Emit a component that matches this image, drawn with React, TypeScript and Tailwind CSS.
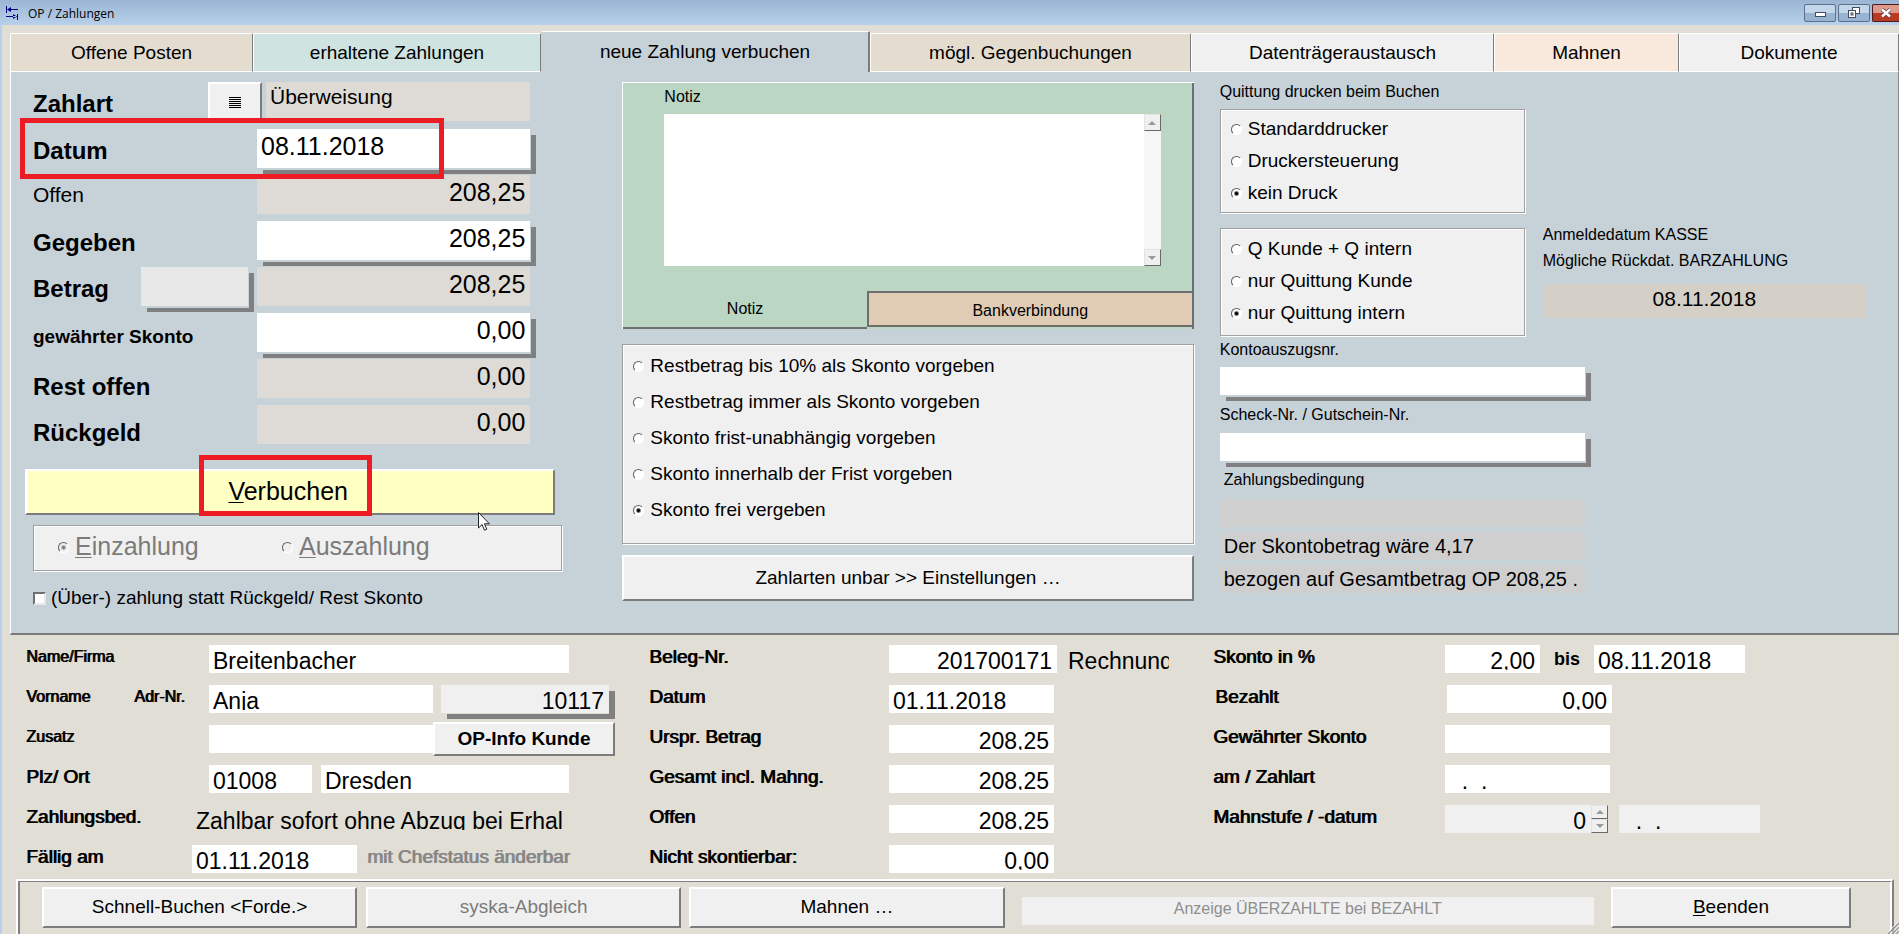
import React, { useState } from 'react';
import clsx from 'clsx';

const raised = 'border-2 border-t-white border-l-white border-r-[#7c7c7c] border-b-[#7c7c7c] bg-[#f0f0f0]';
const etched = 'border border-[#a0a0a0] bg-[#f0f0f0] shadow-[1px_1px_0_0_#ffffff,inset_1px_1px_0_0_#ffffff]';
const dropShadow = 'shadow-[1px_2px_0_0_#c7d1d8,6px_6px_0_0_#808080]';

const tabs = [
  { name: 'Offene Posten', color: 'bg-[#e3dccf]' },
  { name: 'erhaltene Zahlungen', color: 'bg-[#cfe3e1]' },
  { name: 'neue Zahlung verbuchen', color: 'bg-[#c7d1d8]' },
  { name: 'mögl. Gegenbuchungen', color: 'bg-[#e3dccf]' },
  { name: 'Datenträgeraustausch', color: 'bg-[#f0f0f0]' },
  { name: 'Mahnen', color: 'bg-[#f8e9dc]' },
  { name: 'Dokumente', color: 'bg-[#f0f0f0]' },
];

interface RadioProps {
  group: string;
  label: React.ReactNode;
  checked?: boolean;
  disabled?: boolean;
}

function Radio({ group, label, checked, disabled }: RadioProps) {
  return (
    <label className="flex items-center gap-[6px] whitespace-nowrap">
      <input
        type="radio"
        name={group}
        defaultChecked={checked}
        disabled={disabled}
        className="size-[11px] shrink-0 appearance-none rounded-full border border-t-[#606060] border-l-[#606060] border-r-white border-b-white bg-white checked:bg-[radial-gradient(circle,#000_1px,#fff_3px)] disabled:bg-[#f0f0f0] disabled:checked:bg-[radial-gradient(circle,#808080_1px,#f0f0f0_3px)]"
      />
      <span>{label}</span>
    </label>
  );
}

interface AmountRowProps {
  id: string;
  label: string;
  value: string;
  editable?: boolean;
  labelClass?: string;
  left?: boolean;
  children?: React.ReactNode;
}

function AmountRow({ id, label, value, editable, labelClass, left, children }: AmountRowProps) {
  return (
    <div className="grid h-[39px] grid-cols-[224px_1fr]">
      <div className="flex h-[39px] items-center">
        <label htmlFor={id} className={clsx('flex-1 leading-[22px] whitespace-nowrap', labelClass ?? 'pt-1 text-[24px] font-bold')}>
          {label}
        </label>
        {children}
      </div>
      <input
        id={id}
        defaultValue={value}
        readOnly={!editable}
        className={clsx(
          'h-[39px] w-full min-w-0 pr-[5px] pb-1 pl-1 text-[25px] leading-[30px] outline-none',
          left ? 'text-left' : 'text-right',
          editable ? 'bg-white' : 'bg-[#dedbd6]',
          editable && dropShadow
        )}
      />
    </div>
  );
}

interface FieldProps {
  label: string;
  value: string;
  className?: string;
}

// data field of the lower form, the text sits low in the box
function Field({ label, value, className }: FieldProps) {
  return (
    <input
      aria-label={label}
      defaultValue={value}
      className={clsx(
        'h-[28px] min-w-0 border-b-[3px] pt-[8px] pr-[5px] pl-1 text-[23px] leading-[17px] outline-none',
        className ?? 'w-[165px] border-white bg-white text-right'
      )}
    />
  );
}

function FormLabel({ children, className }: { children: React.ReactNode; className?: string }) {
  return (
    <span className={clsx('shrink-0 pb-1 whitespace-nowrap [text-shadow:1px_0_0_currentColor]', className)}>{children}</span>
  );
}

function ScrollArrow({ down, className }: { down?: boolean; className?: string }) {
  return (
    <button
      type="button"
      aria-label={down ? 'nach unten' : 'nach oben'}
      className={clsx('flex items-center justify-center border border-t-[#e3e3e3] border-l-[#e3e3e3] border-r-[#696969] border-b-[#696969] bg-[#f0f0f0]', className)}
    >
      <svg viewBox="0 0 8 4" className="h-1 w-2">
        <path d={down ? 'M0 0h8L4 4z' : 'M0 4h8L4 0z'} fill="#9a9a9a" />
      </svg>
    </button>
  );
}

function TitleBar() {
  return (
    <header className="flex h-[25px] items-center bg-linear-to-b from-[#9ab5d3] to-[#b8d0eb] pl-[5px]">
      <svg viewBox="0 0 14 14" className="size-[14px]" fill="#00007f">
        <path d="M1 0h1v7H1zM3 3h10v1H3zM2 3.500L6 1v5zM12 8h1v6h-1zM1 10h10v1H1zM12 10.500L8 8v5z" />
      </svg>
      <h1 className="ml-[9px] flex-1 pt-[2px] font-['Open_Sans',sans-serif] text-[12px] text-black">OP / Zahlungen</h1>
      <div className="flex gap-[2px]">
        <button type="button" aria-label="Minimieren" className="flex h-[18px] w-[32px] items-center justify-center rounded-xs border border-[#5c708c] bg-linear-to-b from-[#c3d5e9] from-50% to-[#98b3d1] to-50%">
          <svg viewBox="0 0 11 5" className="mt-1 h-[5px] w-[11px]">
            <rect x=".5" y=".5" width="10" height="4" fill="#fff" stroke="#444c5c" />
          </svg>
        </button>
        <button type="button" aria-label="Wiederherstellen" className="flex h-[18px] w-[32px] items-center justify-center rounded-xs border border-[#5c708c] bg-linear-to-b from-[#c3d5e9] from-50% to-[#98b3d1] to-50%">
          <svg viewBox="0 0 12 11" className="h-[11px] w-[12px]" fill="#fff" stroke="#444c5c">
            <rect x="4.500" y=".5" width="7" height="6" />
            <rect x=".5" y="3.500" width="7" height="7" />
            <rect x="3" y="6" width="2" height="2" />
          </svg>
        </button>
        <button type="button" aria-label="Schließen" className="flex h-[18px] w-[27px] items-center justify-center rounded-l-xs border border-r-0 border-[#4c1a1e] bg-linear-to-b from-[#dd9a8c] from-50% to-[#b83a22] to-50%">
          <svg viewBox="0 0 12 10" className="h-[10px] w-[12px]">
            <path d="M2 1.500l8 7M10 1.500l-8 7" stroke="#5a4048" strokeWidth="4" />
            <path d="M2 1.500l8 7M10 1.500l-8 7" stroke="#fff" strokeWidth="2.400" />
          </svg>
        </button>
      </div>
    </header>
  );
}

function PaymentColumn() {
  return (
    <section className="pt-[10px]">
      <div className="flex flex-col gap-[7px] pr-[92px] pl-[22px]">
        <div className="mb-px grid h-[39px] grid-cols-[175px_54px_1fr]">
          <label htmlFor="zahlart" className="flex items-center pt-1 text-[24px] leading-[22px] font-bold">Zahlart</label>
          <button type="button" aria-label="Zahlart wählen" className={clsx('flex items-center justify-center', raised)}>
            <svg viewBox="0 0 12 12" className="size-3" stroke="#000">
              <path d="M0 1.500h12M0 3.500h12M0 5.500h12M0 7.500h12M0 9.500h12M0 11.500h12" />
            </svg>
          </button>
          <input id="zahlart" readOnly defaultValue="Überweisung" className="ml-1 h-[39px] min-w-0 bg-[#dedbd6] px-1 pb-[10px] text-[21px] leading-[26px] outline-none" />
        </div>
        <div className="relative">
          <AmountRow id="datum" label="Datum" value="08.11.2018" editable left />
          <div className="pointer-events-none absolute -top-[11px] -left-[13px] z-10 h-[61px] w-[424px] border-5 border-[#ed1c24]" />
        </div>
        <AmountRow id="offen" label="Offen" value="208,25" labelClass="text-[21px]" />
        <AmountRow id="gegeben" label="Gegeben" value="208,25" editable />
        <AmountRow id="betrag" label="Betrag" value="208,25">
          <button type="button" aria-label="Betrag übernehmen" className={clsx('mr-[9px] h-[39px] w-[107px] bg-[#e8e8e8]', dropShadow)} />
        </AmountRow>
        <AmountRow id="skonto" label="gewährter Skonto" value="0,00" editable labelClass="pt-2 text-[19px] font-bold" />
        <AmountRow id="rest" label="Rest offen" value="0,00" labelClass="pt-4 text-[24px] font-bold" />
        <AmountRow id="rueckgeld" label="Rückgeld" value="0,00" labelClass="pt-4 text-[24px] font-bold" />
      </div>

      <div className="relative mt-[25px] mr-[67px] ml-[14px]">
        <button type="button" className="h-[46px] w-full border-2 border-t-white border-l-white border-r-[#7c7c7c] border-b-[#7c7c7c] bg-[#ffffc4] pr-1 text-[25px]">
          <span className="underline decoration-1 underline-offset-2">V</span>erbuchen
        </button>
        <div className="pointer-events-none absolute -top-[14px] left-[174px] h-[61px] w-[173px] border-5 border-[#ed1c24]" />
        <svg viewBox="0 0 12 19" className="absolute top-[43px] left-[453px] z-10 h-[19px] w-[12px]">
          <path d="M.5.5v15.500l3.600-3.400 2.400 5.600 2.300-1-2.400-5.400h5z" fill="#fff" stroke="#222" />
        </svg>
      </div>

      <div className={clsx('mt-[10px] mr-[60px] ml-[22px] grid h-[46px] grid-cols-[224px_1fr] items-center pb-[2px] pl-6 text-[25px] text-[#7b7b7b]', etched)}>
        <Radio group="richtung" checked disabled label={<><u className="decoration-1 underline-offset-2">E</u>inzahlung</>} />
        <Radio group="richtung" disabled label={<><u className="decoration-1 underline-offset-2">A</u>uszahlung</>} />
      </div>

      <label className="mt-[13px] ml-[22px] flex items-center gap-[5px] text-[19px] leading-[28px]">
        <input type="checkbox" className="size-[13px] appearance-none border-2 border-t-[#707070] border-l-[#707070] border-r-[#e8e8e8] border-b-[#e8e8e8] bg-white" />
        (Über-) zahlung statt Rückgeld/ Rest Skonto
      </label>
    </section>
  );
}

function NoteColumn() {
  return (
    <section className="pt-[10px] pr-[26px]">
      <div className="border-t border-l border-white bg-[#bcd6c4]">
        <div className="border-r-2 border-[#6e6e6e] pt-[2px] pr-[31px] pl-[41px]">
          <label htmlFor="notiz" className="block text-[16px] leading-[24px]">Notiz</label>
          <div className="mt-[5px] flex h-[152px] bg-white">
            <textarea id="notiz" className="min-w-0 flex-1 resize-none outline-none" />
            <div className="flex w-[17px] flex-col justify-between bg-[#f6f6f6]">
              <ScrollArrow className="h-[17px]" />
              <ScrollArrow down className="h-[17px]" />
            </div>
          </div>
        </div>
        <div className="grid grid-cols-[245fr_327fr] items-start border-r-2 border-[#6e6e6e] pt-[25px] text-[16px]">
          <button type="button" className="h-[38px] border-b-2 border-[#6e6e6e] bg-[#bcd6c4]">Notiz</button>
          <button type="button" className="h-[36px] border-2 border-r-0 border-[#6e6e6e] bg-[#e0ccb4] pt-1">Bankverbindung</button>
        </div>
      </div>

      <div className={clsx('mt-[15px] flex h-[200px] flex-col gap-2 pt-[7px] pl-[10px] text-[19px] leading-[28px]', etched)}>
        <Radio group="vorgabe" label="Restbetrag bis 10% als Skonto vorgeben" />
        <Radio group="vorgabe" label="Restbetrag immer als Skonto vorgeben" />
        <Radio group="vorgabe" label="Skonto frist-unabhängig vorgeben" />
        <Radio group="vorgabe" label="Skonto innerhalb der Frist vorgeben" />
        <Radio group="vorgabe" checked label="Skonto frei vergeben" />
      </div>

      <button type="button" className={clsx('mt-[11px] h-[46px] w-full text-[19px]', raised)}>
        Zahlarten unbar &gt;&gt; Einstellungen …
      </button>
    </section>
  );
}

function ReceiptColumn() {
  return (
    <section className="pt-[8px] text-[16px]">
      <h2 className="leading-[24px]">Quittung drucken beim Buchen</h2>
      <div className={clsx('mt-[5px] flex h-[104px] w-[305px] flex-col gap-1 pt-[5px] pl-[10px] text-[19px] leading-[28px]', etched)}>
        <Radio group="druck" label="Standarddrucker" />
        <Radio group="druck" label="Druckersteuerung" />
        <Radio group="druck" checked label="kein Druck" />
      </div>

      <div className="mt-[15px] flex gap-[18px]">
        <div className={clsx('flex h-[108px] w-[305px] shrink-0 flex-col gap-1 pt-[6px] pl-[10px] text-[19px] leading-[28px]', etched)}>
          <Radio group="quittung" label="Q Kunde + Q intern" />
          <Radio group="quittung" label="nur Quittung Kunde" />
          <Radio group="quittung" checked label="nur Quittung intern" />
        </div>
        <div className="-mt-[6px] mr-[32px] flex-1">
          <p className="leading-[26px]">Anmeldedatum KASSE</p>
          <label htmlFor="rueckdat" className="block leading-[26px]">Mögliche Rückdat. BARZAHLUNG</label>
          <input id="rueckdat" readOnly defaultValue="08.11.2018" className="mt-[10px] h-[34px] w-full bg-[#d4d0c8] pb-1 text-center text-[21px] outline-none" />
        </div>
      </div>

      <label htmlFor="kontoauszug" className="mt-[2px] block leading-[24px]">Kontoauszugsnr.</label>
      <input id="kontoauszug" className={clsx('mt-[5px] block h-[28px] w-[365px] bg-white px-1 outline-none', dropShadow)} />
      <label htmlFor="scheck" className="mt-2 block leading-[24px]">Scheck-Nr. / Gutschein-Nr.</label>
      <input id="scheck" className={clsx('mt-[6px] block h-[28px] w-[365px] bg-white px-1 outline-none', dropShadow)} />

      <h2 className="mt-[7px] ml-1 leading-[24px]">Zahlungsbedingung</h2>
      <div className="mt-[7px] flex w-[365px] flex-col gap-[5px] text-[20px] leading-[28px]">
        <p className="h-[28px] bg-[#cfcfcf]" />
        <p className="h-[28px] bg-[#cfcfcf] pl-1">Der Skontobetrag wäre 4,17</p>
        <p className="h-[28px] bg-[#cfcfcf] pl-1 whitespace-nowrap">bezogen auf Gesamtbetrag OP 208,25 .</p>
      </div>
    </section>
  );
}

const row = 'flex h-[28px] items-center';
const whiteLeft = 'border-white bg-white';

function CustomerForm() {
  return (
    <div className="flex flex-col gap-3">
      <div className={row}>
        <FormLabel className="w-[183px] text-[16px]">Name/Firma</FormLabel>
        <Field label="Name/Firma" value="Breitenbacher" className={clsx('w-[360px]', whiteLeft)} />
      </div>
      <div className={row}>
        <FormLabel className="w-[108px] text-[16px]">Vorname</FormLabel>
        <FormLabel className="w-[75px] text-[16px]">Adr-Nr.</FormLabel>
        <Field label="Vorname" value="Anja" className={clsx('w-[224px]', whiteLeft)} />
        <Field label="Adr-Nr." value="10117" className="ml-2 w-[168px] border-[#f0f0f0] bg-[#f0f0f0] text-right shadow-[0_1px_0_0_#e1ded6,6px_6px_0_0_#808080]" />
      </div>
      <div className={row}>
        <FormLabel className="w-[183px] text-[16px]">Zusatz</FormLabel>
        <Field label="Zusatz" value="" className={clsx('w-[224px]', whiteLeft)} />
        <button type="button" className={clsx('z-10 h-[34px] w-[182px] shrink-0 text-[19px] font-bold', raised)}>OP-Info Kunde</button>
      </div>
      <div className={row}>
        <FormLabel className="w-[183px] text-[19px]">Plz/ Ort</FormLabel>
        <Field label="Plz" value="01008" className={clsx('w-[103px]', whiteLeft)} />
        <Field label="Ort" value="Dresden" className={clsx('ml-[9px] w-[248px]', whiteLeft)} />
      </div>
      <div className={row}>
        <FormLabel className="w-[166px] text-[19px]">Zahlungsbed.</FormLabel>
        <Field label="Zahlungsbed." value="Zahlbar sofort ohne Abzug bei Erhal" className="w-[380px] border-[#e1ded6] bg-[#e1ded6]" />
      </div>
      <div className={row}>
        <FormLabel className="w-[166px] text-[19px]">Fällig am</FormLabel>
        <Field label="Fällig am" value="01.11.2018" className={clsx('w-[165px]', whiteLeft)} />
        <FormLabel className="ml-[10px] text-[19px] text-[#868686]">mit Chefstatus änderbar</FormLabel>
      </div>
    </div>
  );
}

function InvoiceForm() {
  return (
    <div className="flex flex-col gap-3 text-[19px]">
      <div className={row}>
        <FormLabel className="w-[240px]">Beleg-Nr.</FormLabel>
        <Field label="Beleg-Nr." value="201700171" className="w-[168px] border-white bg-white text-right" />
        <Field label="Belegart" value="Rechnung" className="ml-[7px] w-[110px] border-[#e1ded6] bg-[#e1ded6]" />
      </div>
      <div className={row}>
        <FormLabel className="w-[240px]">Datum</FormLabel>
        <Field label="Datum" value="01.11.2018" className={clsx('w-[165px]', whiteLeft)} />
      </div>
      <div className={row}>
        <FormLabel className="w-[240px]">Urspr. Betrag</FormLabel>
        <Field label="Urspr. Betrag" value="208,25" />
      </div>
      <div className={row}>
        <FormLabel className="w-[240px]">Gesamt incl. Mahng.</FormLabel>
        <Field label="Gesamt incl. Mahng." value="208,25" />
      </div>
      <div className={row}>
        <FormLabel className="w-[240px]">Offen</FormLabel>
        <Field label="Offen" value="208,25" />
      </div>
      <div className={row}>
        <FormLabel className="w-[240px]">Nicht skontierbar:</FormLabel>
        <Field label="Nicht skontierbar" value="0,00" />
      </div>
    </div>
  );
}

function DiscountForm() {
  return (
    <div className="flex flex-col gap-3 text-[19px]">
      <div className={row}>
        <FormLabel className="w-[232px]">Skonto in %</FormLabel>
        <Field label="Skonto in %" value="2,00" className="w-[95px] border-white bg-white text-right" />
        <span className="w-[54px] text-center text-[18px] font-bold">bis</span>
        <Field label="Skonto bis" value="08.11.2018" className={clsx('w-[151px]', whiteLeft)} />
      </div>
      <div className={row}>
        <FormLabel className="w-[234px] pl-[2px]">Bezahlt</FormLabel>
        <Field label="Bezahlt" value="0,00" />
      </div>
      <div className={row}>
        <FormLabel className="w-[232px]">Gewährter Skonto</FormLabel>
        <Field label="Gewährter Skonto" value="" />
      </div>
      <div className={row}>
        <FormLabel className="w-[232px]">am / Zahlart</FormLabel>
        <Field label="am / Zahlart" value="  .  ." className={clsx('w-[165px] whitespace-pre', whiteLeft)} />
      </div>
      <div className={row}>
        <FormLabel className="w-[232px]">Mahnstufe / -datum</FormLabel>
        <Field label="Mahnstufe" value="0" className="w-[146px] border-[#f0f0f0] bg-[#f0f0f0] text-right" />
        <div className="flex h-[28px] w-[17px] flex-col">
          <ScrollArrow className="flex-1" />
          <ScrollArrow down className="flex-1" />
        </div>
        <Field label="Mahndatum" value="  .  ." className="ml-[11px] w-[141px] border-[#f0f0f0] bg-[#f0f0f0]" />
      </div>
    </div>
  );
}

function ActionBar() {
  return (
    <footer className="mr-[5px] ml-[14px] flex flex-1 border-t-2 border-r-2 border-l-2 border-t-white border-r-[#808080] border-l-white">
      <div className="grid flex-1 grid-cols-[315fr_324fr_323fr_589fr_257fr] items-start border-t border-r-2 border-l-2 border-t-[#808080] border-r-white border-l-[#808080] pt-[5px] pr-[39px] pb-[6px] pl-[22px] text-[19px]">
        <button type="button" className={clsx('h-[41px]', raised)}>Schnell-Buchen &lt;Forde.&gt;</button>
        <button type="button" disabled className={clsx('ml-[9px] h-[41px] text-[#7b7b7b]', raised)}>syska-Abgleich</button>
        <button type="button" className={clsx('ml-[8px] h-[41px]', raised)}>Mahnen …</button>
        <button type="button" disabled className="mt-[10px] ml-[17px] h-[28px] bg-[#f0f0f0] pb-3 text-[16px] text-[#8e8e8e]">
          Anzeige ÜBERZAHLTE bei BEZAHLT
        </button>
        <button type="button" className={clsx('ml-[17px] h-[41px]', raised)}>
          <span className="underline decoration-1 underline-offset-2">B</span>eenden
        </button>
      </div>
    </footer>
  );
}

export default function App() {
  const [activeTab, setActiveTab] = useState('neue Zahlung verbuchen');

  return (
    <div className="relative flex min-h-screen flex-col bg-[#e1ded6] font-['Liberation_Sans',Arial,sans-serif] text-black">
      <TitleBar />

      <main className="flex flex-1 flex-col border-l-2 border-[#b8d0eb]">
        <nav className="grid grid-cols-[243fr_288fr_329fr_321fr_303fr_185fr_220fr] items-end pt-[6px] pl-2 text-[19px]">
          {tabs.map((tab) => {
            const active = tab.name === activeTab;
            return (
              <button
                key={tab.name}
                type="button"
                onClick={() => setActiveTab(tab.name)}
                className={clsx(
                  'rounded-t-xs border-t border-l border-t-white',
                  active ? 'h-[41px] border-r-2 border-r-[#7c7c7c] border-l-[#c7d1d8]' : 'h-[39px] border-r border-b border-r-[#7c7c7c] border-b-white border-l-white pt-[2px]',
                  tab.color
                )}
              >
                {tab.name}
              </button>
            );
          })}
        </nav>

        <div className="ml-2 grid grid-cols-[612fr_598fr_679fr] border-r border-b-2 border-l border-r-[#8c8c8c] border-b-[#7c7c7c] border-l-white bg-[#c7d1d8] pb-[21px]">
          <PaymentColumn />
          <NoteColumn />
          <ReceiptColumn />
        </div>

        <div className="grid grid-cols-[623fr_564fr_686fr] pt-[10px] pb-[6px] pl-6">
          <CustomerForm />
          <InvoiceForm />
          <DiscountForm />
        </div>

        <ActionBar />
      </main>

      <svg viewBox="0 0 12 12" className="absolute right-0 bottom-0 size-3" strokeWidth="1.500">
        <path d="M1 12L12 1M5 12l7-7M9 12l3-3" stroke="#9a9a9a" />
        <path d="M0 11L11 0M4 11.500L12 3.500M8 11.500L12 7.500" stroke="#fff" strokeWidth=".8" />
      </svg>
    </div>
  );
}
